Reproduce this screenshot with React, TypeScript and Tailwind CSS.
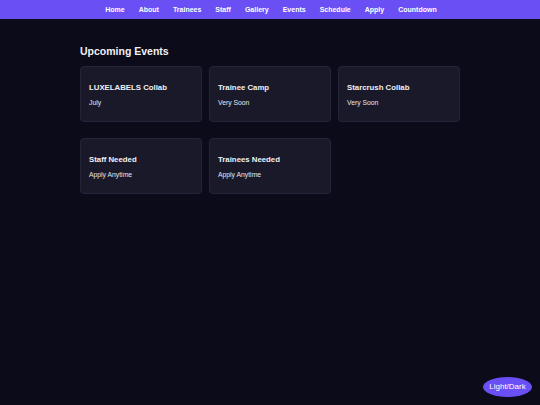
import React from "react";

const links = ["Home", "About", "Trainees", "Staff", "Gallery", "Events", "Schedule", "Apply", "Countdown"];
const events = [
  { t: "LUXELABELS Collab", d: "July" },
  { t: "Trainee Camp", d: "Very Soon" },
  { t: "Starcrush Collab", d: "Very Soon" },
  { t: "Staff Needed", d: "Apply Anytime" },
  { t: "Trainees Needed", d: "Apply Anytime" },
];

export default function App() {
  return (
    <div className="w-[540px] h-[405px] bg-[#0c0b1a] relative overflow-hidden" style={{ fontFamily: '"Liberation Sans", Arial, sans-serif' }}>
      <nav className="h-[19px] bg-[#6a4ff5] flex items-center justify-center gap-[14px] pl-[2px]">
        {links.map((l) => (
          <span key={l} className="text-white text-[7px] font-bold leading-none">{l}</span>
        ))}
      </nav>
      <main className="pl-[80px] pt-[25px] w-[460px]">
        <h2 className="text-[#f1f1f5] text-[10.5px] font-bold leading-[14px]">Upcoming Events</h2>
        <div className="mt-[8px] flex flex-wrap gap-x-[7px] gap-y-[16px]">
          {events.map((e) => (
            <div key={e.t} className="w-[122px] h-[56px] rounded-[4px] bg-[#191929] border border-[#25253a] px-[8px] pt-[16px]">
              <div className="text-[#f1f1f5] text-[7.8px] font-bold leading-[10px]">{e.t}</div>
              <div className="mt-[6px] text-[#e6e6ec] text-[6.8px] leading-[8px]">{e.d}</div>
            </div>
          ))}
        </div>
      </main>
      <button className="absolute left-[483px] top-[377px] w-[49px] h-[20px] rounded-[50%] bg-[#6a4ff5] text-white text-[8px] leading-none">Light/Dark</button>
    </div>
  );
}
